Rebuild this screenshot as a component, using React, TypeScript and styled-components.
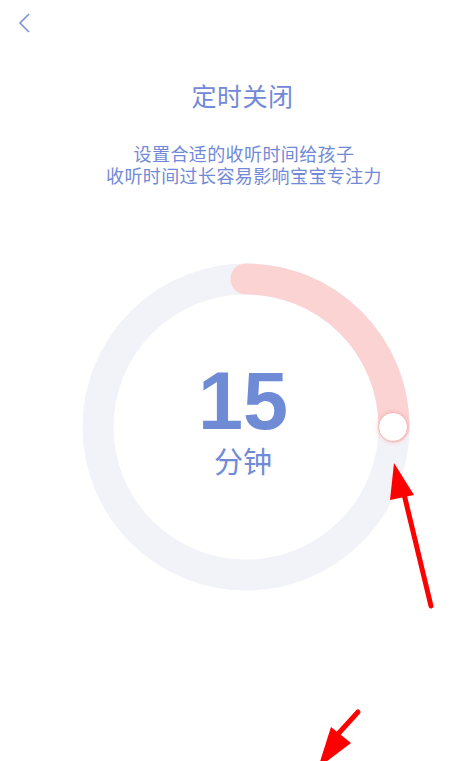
import React from 'react'
import styled, { createGlobalStyle } from 'styled-components'

const GlobalStyle = createGlobalStyle`
  html, body {
    margin: 0;
    padding: 0;
    background: #ffffff;
  }
  body {
    font-family: "Noto Sans CJK SC", "Noto Sans", sans-serif;
  }
`

const Page = styled.div`
  position: relative;
  width: 452px;
  height: 761px;
  overflow: hidden;
  background: #ffffff;
`

const Header = styled.div`
  height: 46px;
  display: flex;
  align-items: flex-start;
  padding: 13px 0 0 18px;
  box-sizing: border-box;
`

const Content = styled.div`
  display: flex;
  flex-direction: column;
  align-items: center;
  padding-left: 36px;
`

const Title = styled.div`
  margin-top: 36px;
  font-size: 25px;
  line-height: 26px;
  color: #7189d6;
  letter-spacing: 0.5px;
  margin-right: 3px;
`

const Sub = styled.div`
  margin-top: 34px;
  font-size: 18px;
  line-height: 22px;
  letter-spacing: 0.4px;
  color: #7189d6;
  text-align: center;
`

const Ring = styled.div`
  position: relative;
  width: 328px;
  height: 328px;
  margin-top: 77px;
  margin-left: 4px;
`

const Center = styled.div`
  position: absolute;
  inset: 0;
  display: flex;
  flex-direction: column;
  align-items: center;
  justify-content: center;
  padding-bottom: 18px;
  box-sizing: border-box;
  color: #6f8bd6;
`

const Minutes = styled.div`
  font-family: "Liberation Sans", Arial, sans-serif;
  font-weight: 700;
  font-size: 81px;
  line-height: 80px;
  margin-right: 6px;
`

const Unit = styled.div`
  margin-top: 4px;
  margin-right: 6px;
  font-size: 29px;
  line-height: 30px;
`

const Marks = styled.svg`
  position: absolute;
  left: 0;
  top: 0;
  pointer-events: none;
`

const BackIcon = () => (
  <svg width="14" height="22" viewBox="0 0 14 22">
    <polyline points="11,1 2,10 11,19" fill="none" stroke="#7b93dc" strokeWidth="1.6" />
  </svg>
)

const Dial = ({ minutes }: { minutes: number }) => {
  const r = 148
  const c = 164
  const angle = (minutes / 60) * Math.PI * 2
  const ex = c + r * Math.sin(angle)
  const ey = c - r * Math.cos(angle)
  return (
    <Ring>
      <svg width="328" height="328" viewBox="0 0 328 328">
        <defs>
          <filter id="knob" x="-50%" y="-50%" width="200%" height="200%">
            <feDropShadow dx="0" dy="0" stdDeviation="2.5" floodColor="#f08a8a" floodOpacity="0.45" />
          </filter>
        </defs>
        <circle cx={c} cy={c} r={r} fill="none" stroke="#f2f3f8" strokeWidth="31" />
        <path
          d={`M ${c} ${c - r} A ${r} ${r} 0 0 1 ${ex} ${ey}`}
          fill="none"
          stroke="#fbd3d3"
          strokeWidth="31"
          strokeLinecap="round"
        />
        <circle cx={ex - 1} cy={ey} r="14.5" fill="#ffffff" stroke="#f5b8b8" strokeWidth="1" filter="url(#knob)" />
      </svg>
      <Center>
        <Minutes>{minutes}</Minutes>
        <Unit>分钟</Unit>
      </Center>
    </Ring>
  )
}

const App = () => {
  return (
    <Page>
      <GlobalStyle />
      <Header>
        <BackIcon />
      </Header>
      <Content>
        <Title>定时关闭</Title>
        <Sub>
          设置合适的收听时间给孩子
          <br />
          收听时间过长容易影响宝宝专注力
        </Sub>
        <Dial minutes={15} />
      </Content>
      <Marks width="452" height="761" viewBox="0 0 452 761">
        <line x1="431" y1="606" x2="404" y2="494" stroke="#ff0000" strokeWidth="5" strokeLinecap="round" />
        <polygon points="394,463 390,500 414,495" fill="#ff0000" />
        <line x1="358" y1="712" x2="338" y2="734" stroke="#ff0000" strokeWidth="5" strokeLinecap="round" />
        <polygon points="318,768 331,727 351,743" fill="#ff0000" />
      </Marks>
    </Page>
  )
}

export default App
